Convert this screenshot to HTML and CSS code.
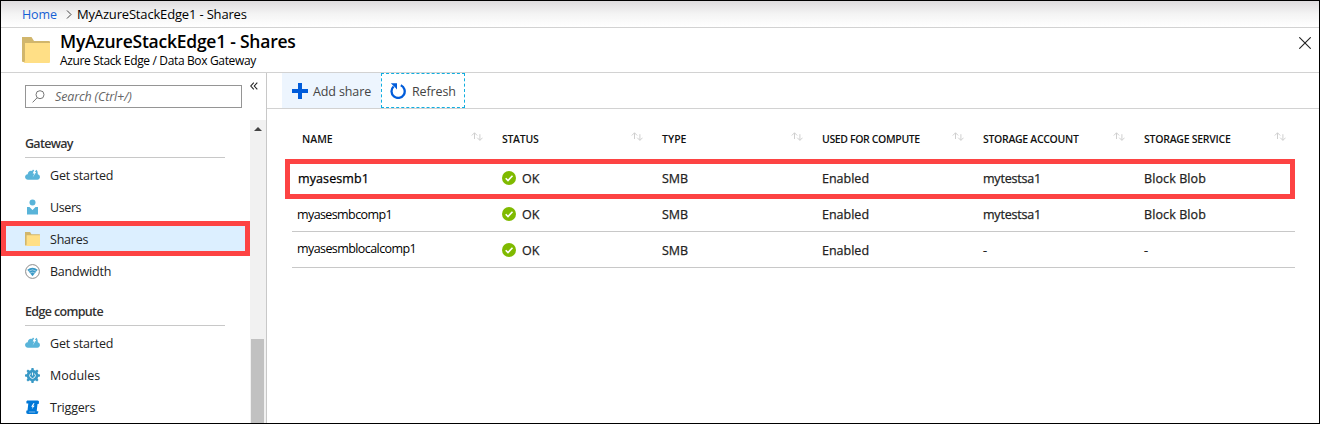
FILE: index.html
```html
<!DOCTYPE html>
<html lang="en">
<head>
<meta charset="utf-8">
<title>MyAzureStackEdge1 - Shares</title>
<link rel="stylesheet" href="styles.css">
</head>
<body>
<svg class="defs" width="0" height="0">
  <symbol id="folder" viewBox="0 0 28 26"><path fill="#d1b66c" d="M0 0h9.500l2.500 4h15q1 0 1 1v20H1q-1 0-1-1z"/><path fill="#ffdf86" d="M3 6h25v19q0 1-1 1H1.500q1.500-1 1.500-3z"/></symbol>
  <symbol id="cloud" viewBox="0 0 15 12"><path fill="#59b4d9" d="M3 10.700C-.8 10.700-.9 5.600 2.700 5.200 3 2.700 5 1.300 7 2.100L7.800.8l1.400.1L7.700 4.500h1.700L7.600 8.500l3.600-5.400H9.800L11.300.7c1.200.8 1.500 2.300 1.500 4.500 3 .7 2.900 5.500-.5 5.500z"/></symbol>
  <symbol id="sort" viewBox="0 0 12 10"><path fill="none" stroke="#cfcfcf" d="M3.500 7V.8M.8 3.500l2.700-2.700 2.700 2.700M8.900 2.200v6M6.200 5.700l2.700 2.700 2.700-2.700"/></symbol>
  <symbol id="check" viewBox="0 0 14 14"><circle cx="7" cy="7" r="7" fill="#7fba00"/><path fill="none" stroke="#fff" stroke-width="1.600" d="M3.700 7.200l2.300 2.300 4.500-4.700"/></symbol>
</svg>
<div class="window">
  <nav class="crumbs">
    <a class="home">Home</a>
    <svg class="chev" width="6" height="9" viewBox="0 0 6 9"><path d="M1 .5l4 4-4 4" fill="none" stroke="#444"/></svg>
    <span class="here">MyAzureStackEdge1 - Shares</span>
  </nav>
  <header class="head">
    <svg class="bigfolder" width="28" height="26"><use href="#folder"/></svg>
    <div class="titles">
      <h1 class="title">MyAzureStackEdge1 - Shares</h1>
      <div class="subtitle">Azure Stack Edge / Data Box Gateway</div>
    </div>
    <svg class="close" width="12" height="12" viewBox="0 0 12 12"><path d="M.3.3l11.400 11.400M11.700.3L.3 11.700" stroke="#222" stroke-width="1.100"/></svg>
  </header>
  <div class="body">
    <aside class="side">
      <div class="searchrow">
        <div class="search">
          <svg width="13" height="13" viewBox="0 0 13 13"><circle cx="8" cy="4.700" r="4" fill="none" stroke="#777"/><path d="M5.200 7.700L.6 12.400" stroke="#777"/></svg>
          <span class="ph">Search (Ctrl+/)</span>
        </div>
        <svg class="collapse" width="8" height="8" viewBox="0 0 8 8"><path d="M3.800.7L.8 4l3 3.300M7.300.7l-3 3.300 3 3.300" fill="none" stroke="#222" stroke-width="1.100"/></svg>
      </div>
      <div class="menuwrap">
        <div class="menu">
          <section class="group">
            <h2 class="gname">Gateway</h2>
            <div class="item"><svg width="15" height="12"><use href="#cloud"/></svg><span class="started">Get started</span></div>
            <div class="item"><svg width="15" height="16" viewBox="0 0 15 16"><circle cx="7.500" cy="3.500" r="3" fill="#59b4d9"/><path fill="#59b4d9" d="M2 8h2.500l3 3L10.500 8H13v7.500H2z"/></svg><span class="users">Users</span></div>
            <div class="item active"><svg width="15" height="14"><use href="#folder"/></svg><span class="shares">Shares</span></div>
            <div class="item"><svg width="15" height="15" viewBox="0 0 15 15"><circle cx="7.500" cy="7.500" r="6.900" fill="#fff" stroke="#8a8a8a"/><path d="M2.300 5.700q5.200-3.800 10.400 0L7.500 12.300z" fill="#3999c6"/><path d="M3.500 7.300q4-3 8 0M5 9.200q2.500-1.900 5 0" fill="none" stroke="#fff" stroke-width=".5"/></svg><span class="bandwidth">Bandwidth</span></div>
          </section>
          <section class="group">
            <h2 class="gname edge">Edge compute</h2>
            <div class="item"><svg width="15" height="12"><use href="#cloud"/></svg><span class="started">Get started</span></div>
            <div class="item"><svg width="15" height="15" viewBox="0 0 15 15"><g fill="#3999c6"><circle cx="7.500" cy="7.500" r="5.800"/><path id="tooth" d="M6 2.500L6.500 0h2L9 2.500v10L8.500 15h-2L6 12.500z"/><use href="#tooth" transform="rotate(45 7.500 7.500)"/><use href="#tooth" transform="rotate(90 7.500 7.500)"/><use href="#tooth" transform="rotate(135 7.500 7.500)"/></g><path d="M5.600 5.500a2.800 2.800 0 1 0 3.800 0M7.500 4.500v3" fill="none" stroke="#fff" stroke-width=".9"/></svg><span class="modules">Modules</span></div>
            <div class="item"><svg width="15" height="15" viewBox="0 0 15 15"><path fill="#0078d7" d="M2.200.5h10.500q1.500 0 1.300 1.500l-.3 2h-1.200l-.8 7.200h1.700l-.3 1.600q-.2 1.200-1.500 1.200H3q-2 0-1.800-2l.3-1.500h1L3.300 3.500H1.500Q.8 1.200 2.200.5z"/><path stroke="#fff" stroke-width=".5" d="M3.800 12h6.500"/><path fill="#fff" d="M8.300 3.300L6.200 6.700h1.500L6.700 9.300 9.700 5.700H8.200L9.500 3.300z"/></svg><span class="triggers">Triggers</span></div>
          </section>
        </div>
        <div class="scroll"><div class="up"></div><div class="thumb"></div></div>
      </div>
    </aside>
    <main class="main">
      <div class="toolbar">
        <div class="btn add"><svg width="16" height="16" viewBox="0 0 16 16"><path fill="#015cda" d="M6 0h4v6h6v4h-6v6H6v-6H0V6h6z"/></svg><span class="addlabel">Add share</span></div>
        <div class="btn refresh"><svg width="16" height="16" viewBox="0 0 16 16"><path d="M10.800 2.300A6.600 6.600 0 1 1 3.600 3.500" fill="none" stroke="#015cda" stroke-width="2.300"/><path d="M.8.200H7v6.200L5 4.200z" fill="#015cda"/></svg><span class="reflabel">Refresh</span></div>
      </div>
      <div class="grid">
        <div class="row hdr">
          <div class="c1"><span class="h1">NAME</span><svg width="12" height="10"><use href="#sort"/></svg></div>
          <div><span class="h2">STATUS</span><svg width="12" height="10"><use href="#sort"/></svg></div>
          <div><span class="h3">TYPE</span><svg width="12" height="10"><use href="#sort"/></svg></div>
          <div><span class="h4">USED FOR COMPUTE</span><svg width="12" height="10"><use href="#sort"/></svg></div>
          <div><span class="h5">STORAGE ACCOUNT</span><svg width="12" height="10"><use href="#sort"/></svg></div>
          <div><span class="h6">STORAGE SERVICE</span><svg width="12" height="10"><use href="#sort"/></svg></div>
        </div>
        <div class="row marked">
          <div class="name n1">myasesmb1</div><div class="status"><svg width="14" height="14"><use href="#check"/></svg><span class="ok">OK</span></div><div><span class="smb">SMB</span></div><div><span class="en">Enabled</span></div><div><span class="acct">mytestsa1</span></div><div><span class="blob">Block Blob</span></div>
        </div>
        <div class="row">
          <div class="name n2">myasesmbcomp1</div><div class="status"><svg width="14" height="14"><use href="#check"/></svg><span class="ok">OK</span></div><div><span class="smb">SMB</span></div><div><span class="en">Enabled</span></div><div><span class="acct">mytestsa1</span></div><div><span class="blob">Block Blob</span></div>
        </div>
        <div class="row">
          <div class="name n3">myasesmblocalcomp1</div><div class="status"><svg width="14" height="14"><use href="#check"/></svg><span class="ok">OK</span></div><div><span class="smb">SMB</span></div><div><span class="en">Enabled</span></div><div>-</div><div>-</div>
        </div>
      </div>
    </main>
  </div>
</div>
</body>
</html>
```
FILE: styles.css
```css
*, *::after { box-sizing: border-box; }
body { margin: 0; font: 12.5px/16px "Open Sans", "Noto Sans", sans-serif; color: #222; background: #fff; }
.defs { position: absolute; }
svg { display: block; flex: none; }
span, h1, h2, .subtitle, .name { white-space: nowrap; }
.window { width: 1320px; height: 424px; border: 1px solid #000; display: flex; flex-direction: column; overflow: hidden; }

.crumbs { height: 27px; flex: none; border-bottom: 1px solid #d2d2d2; background: linear-gradient(#dedcde, #f4f4f4 50%, #fff); display: flex; align-items: center; padding-left: 21px; }
.home { width: 35px; color: #1560d4; letter-spacing: -.1px; padding-top: 1px; }
.chev { margin: 0 5px 0 9px; }
.here { color: #000; font-size: 13px; letter-spacing: -.17px; }

.head { height: 45px; flex: none; border-bottom: 1px solid #d2d2d2; display: flex; padding-left: 21px; }
.bigfolder { margin-top: 9px; }
.titles { margin-left: 10px; flex: 1; }
.title { margin: 1px 0 0; font-size: 17.500px; line-height: 25px; font-weight: 600; color: #000; letter-spacing: -.24px; }
.subtitle { font-size: 12px; line-height: 14px; color: #000; letter-spacing: -.35px; }
.close { margin: 9px 8px 0 0; }

.body { display: flex; flex: 1; min-height: 0; }
.side { width: 266px; flex: none; border-right: 1px solid #c8c8c8; display: flex; flex-direction: column; }
.searchrow { height: 47px; flex: none; display: flex; padding: 12px 0 0 24px; }
.search { width: 217px; height: 23px; border: 1px solid #959595; display: flex; align-items: center; padding-left: 6px; }
.ph { font-size: 12.500px; font-style: italic; color: #666; margin-left: 10px; letter-spacing: -.15px; padding-top: 1px; }
.collapse { margin: -3px 0 0 8px; }
.menuwrap { flex: 1; min-height: 0; display: flex; }
.menu { width: 249px; flex: none; overflow: hidden; }
.scroll { width: 16px; background: #f1f1f1; display: flex; flex-direction: column; padding: 7px 2px 0 1px; }
.up { width: 0; height: 4px; border: solid transparent; border-width: 0 4px 4px; border-bottom-color: #444; margin-left: 2.500px; }
.thumb { width: 13px; flex: 1; background: #c1c1c1; margin-top: 208px; }
.group { height: 168px; padding-top: 12px; }
.gname { margin: 0 0 1px 24px; width: 200px; height: 26px; border-bottom: 1px solid #c8c8c8; font-size: 12.500px; line-height: 23px; font-weight: 600; letter-spacing: -.7px; color: #333; }
.edge { letter-spacing: -.65px; }
.item { height: 32px; display: flex; align-items: center; padding-left: 24px; gap: 10px; }
.item span { padding-top: 2px; letter-spacing: -.2px; }
.item .users { letter-spacing: -.4px; }
.item .modules { letter-spacing: 0; }
.active { background: #dcefff; border: solid #fd4343; border-width: 5px; height: 35px; margin: -2px 0 -1px; padding-left: 19px; }

.main { flex: 1; }
.toolbar { height: 36px; border-bottom: 1px solid #d2d2d2; display: flex; padding-left: 15px; }
.btn { height: 35px; display: flex; align-items: center; color: #444; }
.btn span { padding-top: 2px; letter-spacing: -.12px; }
.add { width: 99px; background: #edf5fe; padding-left: 10px; gap: 5px; }
.refresh { width: 84px; border: 1px dashed #10aee0; padding-left: 8px; gap: 6px; }
.grid { margin: 14px 24px 0 25px; -webkit-text-stroke: .25px; }
.row { position: relative; height: 36px; border-bottom: 1px solid #c8c8c8; display: grid; grid-template-columns: 200px 160px 160px 161px 161px 161px; align-items: center; padding: 3px 0 0 10px; width: 1003px; }
.hdr { height: 37px; border-bottom: 0; padding-top: 0; padding-bottom: 5px; font-size: 10.500px; font-weight: 600; color: #111; -webkit-text-stroke: 0; }
.hdr > div { display: flex; justify-content: space-between; padding-right: 19px; }
.hdr svg { margin-top: 1px; }
.h2 { letter-spacing: -.3px; }
.h4 { letter-spacing: -.37px; }
.h5 { letter-spacing: -.32px; }
.h6 { letter-spacing: -.26px; }
.acct { letter-spacing: -.2px; }
.blob { letter-spacing: .1px; }
.marked { border-bottom-color: transparent; }
.marked::after { content: ""; position: absolute; left: -7px; right: 0; top: -1px; height: 40px; border: 5px solid #fd4343; }
.name { color: #000; margin-left: -5px; }
.n1 { margin-left: -4px; letter-spacing: .1px; }
.n2, .n3 { -webkit-text-stroke: 0; letter-spacing: -.6px; }
.n3 { margin-top: -4px; letter-spacing: -.58px; }
.status { display: flex; gap: 6px; align-items: center; }
.status svg { margin-top: -2px; }
```
